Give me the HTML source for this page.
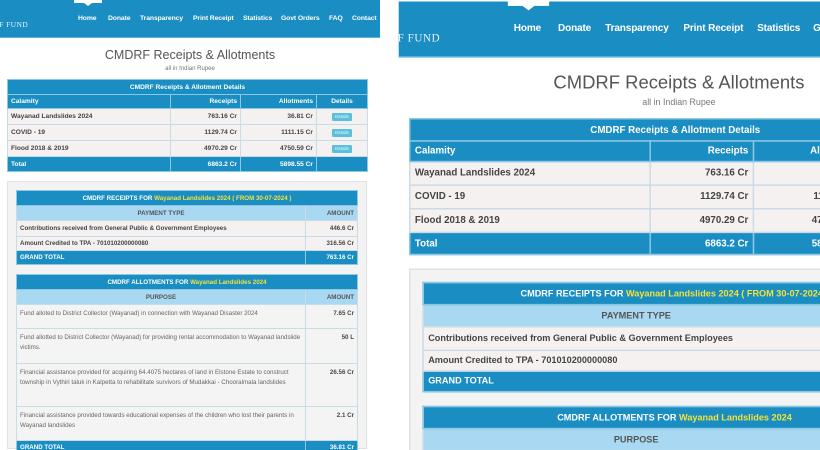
<!DOCTYPE html>
<html><head><meta charset="utf-8"><style>
*{margin:0;padding:0;box-sizing:border-box}
html,body{width:820px;height:450px;overflow:hidden}
body{background:#fff;font-family:"Liberation Sans",sans-serif;position:relative}
.panel{position:absolute;top:0;height:450px;overflow:hidden;background:#fff}
.pg{position:absolute;left:0;top:0;width:380px;height:450px;overflow:hidden;transform-origin:0 0}
.hdr{position:absolute;left:-200px;top:0;width:800px;height:38px;background:#1a8dc2;border-bottom:1px solid #5fb3dc}
.tab{position:absolute;left:74px;top:0;width:28px;height:3px;background:#fff}
.tab:after{content:"";position:absolute;left:10px;top:3px;border:4px solid transparent;border-top:3px solid #fff}
.logo{position:absolute;top:20px;color:#e8f4fb;font-family:"Liberation Serif",serif;font-size:7.5px;letter-spacing:.4px}
.nav{position:absolute;top:15px;color:#fff;font-size:6.8px;font-weight:bold;white-space:nowrap;letter-spacing:-.1px}
h1{position:absolute;left:0;width:380px;top:48px;text-align:center;font-size:12.5px;color:#555;font-weight:normal}
.sub{position:absolute;left:0;width:380px;top:66px;text-align:center;font-size:6px;color:#777}
table{border-collapse:collapse;position:absolute;font-size:6.6px;font-weight:bold;color:#444}
td,th{border:0.7px solid #c9dbe5;padding:0 3px;white-space:nowrap}
.b td,.b th{background:#1a8dc2;color:#fff;border-color:#8cc7e3}
.lb td{background:#a8d8f2;color:#555;text-align:center}
.r td{background:#f6f1f1}
.ra{text-align:right}
.btn{display:inline-block;background:#5bc0de;color:#eaf7fc;font-size:4.5px;padding:1.5px 3px;border-radius:1px;font-weight:normal}
.y{color:#f2e33a}
.box{position:absolute;left:7px;top:181px;width:360px;height:268px;background:#f3f3f3;border:0.7px solid #e2e2e2}
.al td{background:#f4f4f4;font-weight:normal;color:#666;vertical-align:top;padding-top:4px;white-space:normal;line-height:10px;font-size:6.2px}
.al td.ra{font-weight:bold;color:#444}
</style></head><body>
<div class="panel" style="left:0;width:381px"><div class="pg" id="p1">
<div class="hdr"></div><div class="tab"></div>
<div class="logo" style="left:-24px">RELIEF FUND</div>
<div class="nav" style="left:78px">Home</div><div class="nav" style="left:108px">Donate</div><div class="nav" style="left:140px">Transparency</div><div class="nav" style="left:193px">Print Receipt</div><div class="nav" style="left:243px">Statistics</div><div class="nav" style="left:281px">Govt Orders</div><div class="nav" style="left:329px">FAQ</div><div class="nav" style="left:352px">Contact</div>
<h1>CMDRF Receipts &amp; Allotments</h1>
<div class="sub">all in Indian Rupee</div>
<table style="left:7px;top:79px;width:361px">
<tr class="b" style="height:15px"><td colspan="4" style="text-align:center">CMDRF Receipts &amp; Allotment Details</td></tr>
<tr class="b" style="height:14px"><td style="width:163px">Calamity</td><td class="ra" style="width:70px">Receipts</td><td class="ra" style="width:76px">Allotments</td><td style="text-align:center">Details</td></tr>
<tr class="r" style="height:16px"><td>Wayanad Landslides 2024</td><td class="ra">763.16 Cr</td><td class="ra">36.81 Cr</td><td style="text-align:center"><span class="btn">Details</span></td></tr>
<tr class="r" style="height:16px"><td>COVID - 19</td><td class="ra">1129.74 Cr</td><td class="ra">1111.15 Cr</td><td style="text-align:center"><span class="btn">Details</span></td></tr>
<tr class="r" style="height:16px"><td>Flood 2018 &amp; 2019</td><td class="ra">4970.29 Cr</td><td class="ra">4750.59 Cr</td><td style="text-align:center"><span class="btn">Details</span></td></tr>
<tr class="b" style="height:15px"><td>Total</td><td class="ra">6863.2 Cr</td><td class="ra">5898.55 Cr</td><td></td></tr>
</table>
<div class="box"></div>
<table style="left:16px;top:190px;width:342px;font-size:6.2px">
<tr class="b" style="height:15px"><td colspan="2" style="text-align:center">CMDRF RECEIPTS FOR <span class="y">Wayanad Landslides 2024 ( FROM 30-07-2024 )</span></td></tr>
<tr class="lb" style="height:15px"><td>PAYMENT TYPE</td><td style="width:52px;text-align:right">AMOUNT</td></tr>
<tr class="r" style="height:16px"><td>Contributions received from General Public &amp; Government Employees</td><td class="ra">446.6 Cr</td></tr>
<tr class="r" style="height:14px"><td>Amount Credited to TPA - 701010200000080</td><td class="ra">316.56 Cr</td></tr>
<tr class="b" style="height:14px"><td>GRAND TOTAL</td><td class="ra">763.16 Cr</td></tr>
</table>
<table style="left:16px;top:274px;width:342px;font-size:6.2px">
<tr class="b" style="height:15px"><td colspan="2" style="text-align:center">CMDRF ALLOTMENTS FOR <span class="y">Wayanad Landslides 2024</span></td></tr>
<tr class="lb" style="height:15px"><td>PURPOSE</td><td style="width:52px;text-align:right">AMOUNT</td></tr>
<tr class="al" style="height:24px"><td>Fund alloted to District Collector (Wayanad) in connection with Wayanad Disaster 2024</td><td class="ra">7.65 Cr</td></tr>
<tr class="al" style="height:35px"><td>Fund allotted to District Collector (Wayanad) for providing rental accommodation to Wayanad landslide victims.</td><td class="ra">50 L</td></tr>
<tr class="al" style="height:43px"><td>Financial assistance provided for acquiring 64.4075 hectares of land in Elstone Estate to construct township in Vythiri taluk in Kalpetta to rehabilitate survivors of Mudakkai - Chooralmala landslides</td><td class="ra">26.56 Cr</td></tr>
<tr class="al" style="height:34px"><td>Financial assistance provided towards educational expenses of the children who lost their parents in Wayanad landslides</td><td class="ra">2.1 Cr</td></tr>
<tr class="b" style="height:14px"><td>GRAND TOTAL</td><td class="ra">36.81 Cr</td></tr>
</table>
</div></div>
<div class="panel" style="left:381px;width:439px" id="p2"></div>
<script>
var c=document.getElementById('p1').cloneNode(true);c.id='';c.style.transform='translate(17.7px,1.5px) scale(1.475)';document.getElementById('p2').appendChild(c);
</script>
</body></html>
